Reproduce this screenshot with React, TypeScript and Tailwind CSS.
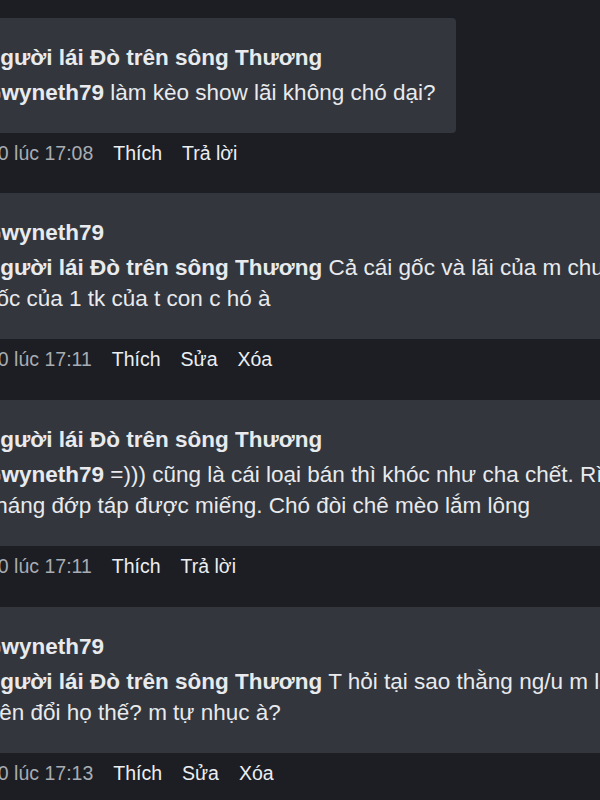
import React from 'react';

type Comment = {
    author: string;
    lines: React.ReactNode[];
    time: string;
    actions: string[];
    first?: boolean;
};

const comments: Comment[] = [
    {
        author: 'Người lái Đò trên sông Thương',
        lines: [
            <>
                <span className="font-bold">Gwyneth79</span> làm kèo show lãi không chó dại?
            </>,
        ],
        time: '10 lúc 17:08',
        actions: ['Thích', 'Trả lời'],
        first: true,
    },
    {
        author: 'Gwyneth79',
        lines: [
            <>
                <span className="font-bold">Người lái Đò trên sông Thương</span> Cả cái gốc và lãi của m chưa bằng cái
            </>,
            <>gốc của 1 tk của t con c hó à</>,
        ],
        time: '10 lúc 17:11',
        actions: ['Thích', 'Sửa', 'Xóa'],
    },
    {
        author: 'Người lái Đò trên sông Thương',
        lines: [
            <>
                <span className="font-bold">Gwyneth79</span> =))) cũng là cái loại bán thì khóc như cha chết. Rình
            </>,
            <>cháng đớp táp được miếng. Chó đòi chê mèo lắm lông</>,
        ],
        time: '10 lúc 17:11',
        actions: ['Thích', 'Trả lời'],
    },
    {
        author: 'Gwyneth79',
        lines: [
            <>
                <span className="font-bold">Người lái Đò trên sông Thương</span> T hỏi tại sao thằng ng/u m lại thay
            </>,
            <span className="ml-[9px]">tên đổi họ thế? m tự nhục à?</span>,
        ],
        time: '10 lúc 17:13',
        actions: ['Thích', 'Sửa', 'Xóa'],
    },
];

function CommentBlock({ c }: { c: Comment }) {
    return (
        <div>
            {/* bubble */}
            <div
                className={`bg-[#33363c] rounded-[4px] pl-[10px] pt-[24px] pb-[25px] text-[22.5px] leading-[31px] text-[#e8eaee] ${
                    c.first ? 'w-[482px]' : 'w-full'
                }`}
            >
                <div className="font-bold whitespace-nowrap mb-[4px]">{c.author}</div>
                {c.lines.map((line, i) => (
                    <div key={i} className="whitespace-nowrap">
                        {line}
                    </div>
                ))}
            </div>

            {/* footer: time + actions */}
            <div
                className={`pt-[6px] pl-[13px] flex gap-[20px] text-[19.5px] leading-[28px] whitespace-nowrap ${
                    c.first ? 'h-[60px]' : 'h-[61px]'
                }`}
            >
                <span className="text-[#a9acb1]">{c.time}</span>
                {c.actions.map((a) => (
                    <span key={a} className="text-[#eceef1]">
                        {a}
                    </span>
                ))}
            </div>
        </div>
    );
}

export default function App() {
    return (
        <div
            className="w-[600px] h-[800px] overflow-hidden bg-[#1c1e24]"
            style={{ fontFamily: '"Liberation Sans", Arial, sans-serif' }}
        >
            <div className="-ml-[26px] w-[800px] pt-[18px]">
                {comments.map((c, i) => (
                    <CommentBlock key={i} c={c} />
                ))}
            </div>
        </div>
    );
}
